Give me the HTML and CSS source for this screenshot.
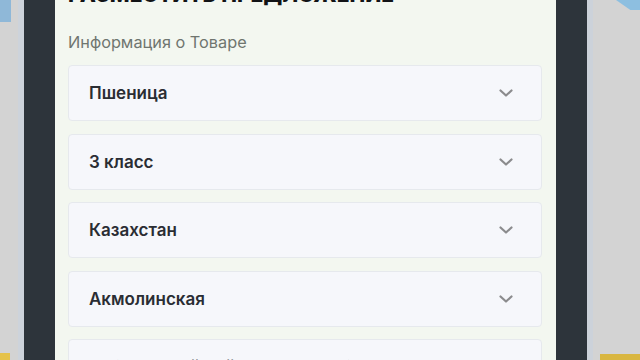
FILE: index.html
```html
<!DOCTYPE html>
<html lang="ru">
<head>
<meta charset="utf-8">
<link rel="stylesheet" href="styles.css">
</head>
<body>
<div class="deco deco-blue-tl"></div>
<div class="deco deco-blue-tr"></div>
<div class="deco deco-yellow-bl"></div>
<div class="deco deco-yellow-br"></div>
<div class="stage">
  <div class="side side-left"></div>
  <div class="phone">
    <main class="panel">
      <h1 class="title">РАЗМЕСТИТЬ ПРЕДЛОЖЕНИЕ</h1>
      <div class="label">Информация о Товаре</div>
      <div class="fields">
        <div class="select"><span>Пшеница</span><svg class="chev" viewBox="0 0 14 8"><path d="M1.5 1.5 L7 6.5 L12.5 1.5"/></svg></div>
        <div class="select"><span>3 класс</span><svg class="chev" viewBox="0 0 14 8"><path d="M1.5 1.5 L7 6.5 L12.5 1.5"/></svg></div>
        <div class="select"><span>Казахстан</span><svg class="chev" viewBox="0 0 14 8"><path d="M1.5 1.5 L7 6.5 L12.5 1.5"/></svg></div>
        <div class="select"><span>Акмолинская</span><svg class="chev" viewBox="0 0 14 8"><path d="M1.5 1.5 L7 6.5 L12.5 1.5"/></svg></div>
        <div class="select"><span>Атбасарский район, город Атбасар</span><svg class="chev" viewBox="0 0 14 8"><path d="M1.5 1.5 L7 6.5 L12.5 1.5"/></svg></div>
      </div>
    </main>
  </div>
  <div class="side side-right"></div>
</div>
</body>
</html>
```
FILE: styles.css
```css
html, body {
  margin: 0;
  padding: 0;
  width: 640px;
  height: 360px;
  overflow: hidden;
  background: #d3d3d3;
  font-family: Inter, Roboto, "Noto Sans", sans-serif;
}
.stage {
  display: flex;
  height: 360px;
  position: relative;
  z-index: 1;
}
.side-left {
  width: 18px;
  flex: none;
  border-right: 6px solid #cdd3db;
}
.side-right {
  flex: 1;
  border-left: 6px solid #ccd2da;
}
.phone {
  width: 501px;
  flex: none;
  border-left: 31px solid #2d343b;
  border-right: 31px solid #2d343b;
  background: #f3f7f0;
  height: 360px;
  overflow: hidden;
}
.panel {
  padding: 1px 14px 0 13px;
}
.title {
  margin: -18px 0 0;
  font-size: 21px;
  line-height: 24px;
  font-weight: 800;
  color: #111316;
}
.label {
  margin-top: 25px;
  font-size: 16.3px;
  line-height: 20px;
  color: #6f756f;
}
.fields {
  margin-top: 13px;
  display: flex;
  flex-direction: column;
  gap: 12.5px;
}
.select {
  height: 54px;
  background: #f6f7fb;
  border: 1px solid #e6e9ed;
  border-radius: 4px;
  display: flex;
  align-items: center;
  justify-content: space-between;
  padding: 0 28px 0 20px;
  box-sizing: content-box;
}
.select span {
  font-size: 17px;
  font-weight: 600;
  color: #2a2d33;
}
.chev {
  width: 14px;
  height: 8px;
  fill: none;
  stroke: #8b8b8d;
  stroke-width: 2.2;
  stroke-linecap: round;
  stroke-linejoin: round;
}
.deco {
  position: absolute;
  z-index: 2;
}
.deco-blue-tl {
  left: 0;
  top: 0;
  width: 11px;
  height: 22px;
  background: #8fb8d8;
}
.deco-blue-tr {
  right: 0;
  top: 0;
  width: 24px;
  height: 10px;
  background: #8dbfe0;
  clip-path: polygon(0 0, 100% 0, 100% 100%, 60% 100%);
}
.deco-yellow-bl {
  left: 0;
  bottom: 0;
  width: 10px;
  height: 7px;
  background: #e5c24a;
}
.deco-yellow-br {
  right: 0;
  bottom: 0;
  width: 40px;
  height: 6px;
  background: #d9b640;
}
```
